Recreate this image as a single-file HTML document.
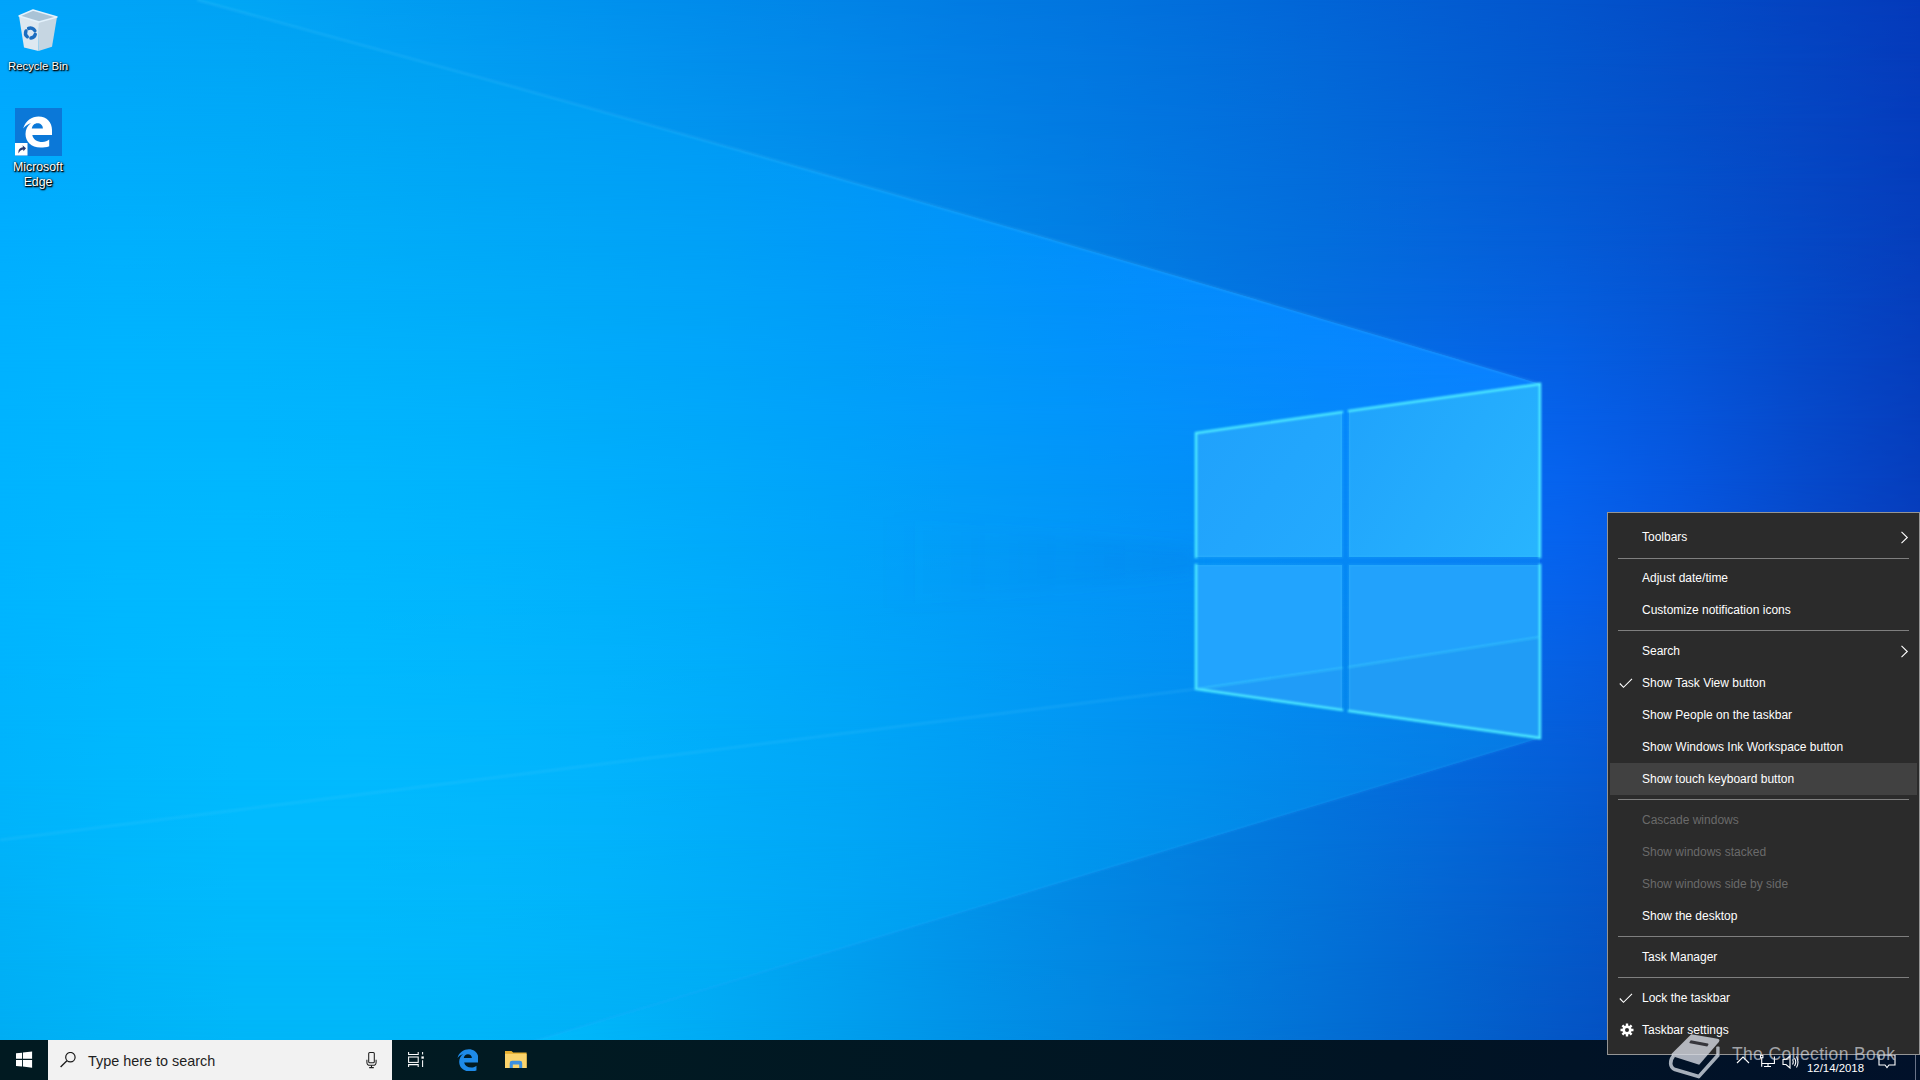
<!DOCTYPE html>
<html><head><meta charset="utf-8"><title>Desktop</title><style>
html,body{margin:0;padding:0;width:1920px;height:1080px;overflow:hidden}
body{position:relative;background:#0290ee;font-family:"Liberation Sans",sans-serif}
#wall{position:absolute;left:0;top:0;width:1920px;height:1080px;overflow:hidden}
.fo,.fb{position:absolute;left:0;top:0;width:1920px;height:1080px}
.fb{clip-path:path('M0 0 L197 0 Q868 182 1540 384 L1540 738 L404 1080 L0 1080 Z')}
.bd{position:absolute;left:0;width:1920px}
.bd i{position:absolute;left:0;top:0;width:100%;height:100%;-webkit-mask-image:linear-gradient(180deg,transparent,#000);mask-image:linear-gradient(180deg,transparent,#000)}
#fx{position:absolute;left:0;top:0}
.ico{position:absolute;left:0;width:76px;text-align:center;color:#fff;font-size:11.4px;line-height:15px;text-shadow:1px 1px 1px #000,0 0 2px rgba(0,0,0,.9),1px 1px 2px #000}
#taskbar{position:absolute;left:0;top:1040px;width:1920px;height:40px;background:linear-gradient(90deg,#011a21 0,#011a22 560px,#011424 1400px,#01112a 1920px)}
#search{position:absolute;left:48px;top:0;width:344px;height:40px;background:#f2f2f2}
#search span{position:absolute;left:40px;top:12.8px;font-size:14.4px;line-height:16px;color:#1e1e1e;white-space:nowrap}
#tb svg{position:absolute}
#menu{position:absolute;left:1607px;top:512px;width:311px;height:541px;background:#2b2b2b;border:1px solid rgba(200,200,200,.68)}
.mi{position:absolute;left:2px;width:307px;height:32px;color:#fff;font-size:12px}
.mi span{position:absolute;left:32px;top:9px;line-height:14px;white-space:nowrap}
.mi.dis{color:#6a6a6a}
.mi.hl{background:#414141}
.sep{position:absolute;left:10px;width:291px;height:1px;background:#7f7f7f}
#date{position:absolute;left:1807px;top:22px;font-size:11.4px;line-height:13px;color:#fff;white-space:nowrap}
#wm{position:absolute;left:1732px;top:1044px;font-size:17.5px;letter-spacing:.35px;line-height:20px;color:rgba(224,226,232,.66);white-space:nowrap}

</style></head><body>
<div id="wall"><div class="fo"><div class="bd" style="top:0px;height:60px;background:linear-gradient(90deg,#02b2f8 0px,#02acf7 120px,#02a6f5 240px,#029ff3 360px,#0199f0 480px,#0192ee 600px,#018beb 720px,#0284e7 840px,#027ce3 960px,#0275df 1080px,#026ddb 1200px,#0265d7 1320px,#035dd2 1440px,#0355cd 1560px,#034cc7 1680px,#0443c1 1800px,#043abb 1920px)"><i style="background:linear-gradient(90deg,#02b6fb 0px,#02b0f9 120px,#02aaf7 240px,#02a3f5 360px,#029df2 480px,#0296f0 600px,#028eec 720px,#0287e9 840px,#027fe5 960px,#0278e1 1080px,#0270dc 1200px,#0368d8 1320px,#035fd3 1440px,#0357ce 1560px,#044ec8 1680px,#0445c2 1800px,#053bbb 1920px)"></i></div><div class="bd" style="top:60px;height:60px;background:linear-gradient(90deg,#02b6fb 0px,#02b0f9 120px,#02aaf7 240px,#02a3f5 360px,#029df2 480px,#0296f0 600px,#028eec 720px,#0287e9 840px,#027fe5 960px,#0278e1 1080px,#0270dc 1200px,#0368d8 1320px,#035fd3 1440px,#0357ce 1560px,#044ec8 1680px,#0445c2 1800px,#053bbb 1920px)"><i style="background:linear-gradient(90deg,#02bbfd 0px,#02b5fb 120px,#02aef9 240px,#02a7f7 360px,#02a0f4 480px,#0299f1 600px,#0292ee 720px,#028aea 840px,#0282e6 960px,#027ae2 1080px,#0272de 1200px,#036ad9 1320px,#0361d5 1440px,#0458d0 1560px,#044fc9 1680px,#0546c3 1800px,#053cbc 1920px)"></i></div><div class="bd" style="top:120px;height:60px;background:linear-gradient(90deg,#02bbfd 0px,#02b5fb 120px,#02aef9 240px,#02a7f7 360px,#02a0f4 480px,#0299f1 600px,#0292ee 720px,#028aea 840px,#0282e6 960px,#027ae2 1080px,#0272de 1200px,#036ad9 1320px,#0361d5 1440px,#0458d0 1560px,#044fc9 1680px,#0546c3 1800px,#053cbc 1920px)"><i style="background:linear-gradient(90deg,#02c0ff 0px,#02b9fe 120px,#02b2fb 240px,#02abf9 360px,#02a4f6 480px,#029cf3 600px,#0295ef 720px,#028dec 840px,#0285e8 960px,#027de3 1080px,#0374df 1200px,#036cdb 1320px,#0463d8 1440px,#045ad3 1560px,#0451cc 1680px,#0547c4 1800px,#053dbc 1920px)"></i></div><div class="bd" style="top:180px;height:60px;background:linear-gradient(90deg,#02c0ff 0px,#02b9fe 120px,#02b2fb 240px,#02abf9 360px,#02a4f6 480px,#029cf3 600px,#0295ef 720px,#028dec 840px,#0285e8 960px,#027de3 1080px,#0374df 1200px,#036cdb 1320px,#0463d8 1440px,#045ad3 1560px,#0451cc 1680px,#0547c4 1800px,#053dbc 1920px)"><i style="background:linear-gradient(90deg,#02c4ff 0px,#02bdff 120px,#02b6fd 240px,#02affb 360px,#02a7f8 480px,#029ff4 600px,#0298f1 720px,#028fed 840px,#0287e9 960px,#027fe4 1080px,#0376e0 1200px,#036edd 1320px,#0465db 1440px,#045cd7 1560px,#0552cf 1680px,#0548c5 1800px,#063ebc 1920px)"></i></div><div class="bd" style="top:240px;height:60px;background:linear-gradient(90deg,#02c4ff 0px,#02bdff 120px,#02b6fd 240px,#02affb 360px,#02a7f8 480px,#029ff4 600px,#0298f1 720px,#028fed 840px,#0287e9 960px,#027fe4 1080px,#0376e0 1200px,#036edd 1320px,#0465db 1440px,#045cd7 1560px,#0552cf 1680px,#0548c5 1800px,#063ebc 1920px)"><i style="background:linear-gradient(90deg,#02c8ff 0px,#02c1ff 120px,#02b9ff 240px,#02b2fc 360px,#02aaf9 480px,#02a2f6 600px,#029af2 720px,#0292ee 840px,#0289ea 960px,#0381e5 1080px,#0378e2 1200px,#046fe0 1320px,#0467e0 1440px,#055edd 1560px,#0554d3 1680px,#0549c7 1800px,#063ebd 1920px)"></i></div><div class="bd" style="top:300px;height:60px;background:linear-gradient(90deg,#02c8ff 0px,#02c1ff 120px,#02b9ff 240px,#02b2fc 360px,#02aaf9 480px,#02a2f6 600px,#029af2 720px,#0292ee 840px,#0289ea 960px,#0381e5 1080px,#0378e2 1200px,#046fe0 1320px,#0467e0 1440px,#055edd 1560px,#0554d3 1680px,#0549c7 1800px,#063ebd 1920px)"><i style="background:linear-gradient(90deg,#02ccff 0px,#02c4ff 120px,#02bdff 240px,#02b5fd 360px,#02adfa 480px,#02a5f7 600px,#029df3 720px,#0294ef 840px,#028bea 960px,#0382e6 1080px,#037ae3 1200px,#0471e3 1320px,#0569e6 1440px,#0560e4 1560px,#0655d8 1680px,#0649c9 1800px,#063ebd 1920px)"></i></div><div class="bd" style="top:360px;height:60px;background:linear-gradient(90deg,#02ccff 0px,#02c4ff 120px,#02bdff 240px,#02b5fd 360px,#02adfa 480px,#02a5f7 600px,#029df3 720px,#0294ef 840px,#028bea 960px,#0382e6 1080px,#037ae3 1200px,#0471e3 1320px,#0569e6 1440px,#0560e4 1560px,#0655d8 1680px,#0649c9 1800px,#063ebd 1920px)"><i style="background:linear-gradient(90deg,#02cfff 0px,#02c8ff 120px,#02c0ff 240px,#02b8ff 360px,#02b0fb 480px,#02a7f8 600px,#029ff4 720px,#0296ef 840px,#028deb 960px,#0384e7 1080px,#037be4 1200px,#0473e6 1320px,#056beb 1440px,#0661ea 1560px,#0656dd 1680px,#064acb 1800px,#063ebd 1920px)"></i></div><div class="bd" style="top:420px;height:60px;background:linear-gradient(90deg,#02cfff 0px,#02c8ff 120px,#02c0ff 240px,#02b8ff 360px,#02b0fb 480px,#02a7f8 600px,#029ff4 720px,#0296ef 840px,#028deb 960px,#0384e7 1080px,#037be4 1200px,#0473e6 1320px,#056beb 1440px,#0661ea 1560px,#0656dd 1680px,#064acb 1800px,#063ebd 1920px)"><i style="background:linear-gradient(90deg,#02d3ff 0px,#02cbff 120px,#02c3ff 240px,#02bbff 360px,#02b2fc 480px,#02aaf8 600px,#02a1f4 720px,#0298f0 840px,#028feb 960px,#0385e7 1080px,#037ce5 1200px,#0474e8 1320px,#056cee 1440px,#0663ee 1560px,#0657e0 1680px,#064acc 1800px,#063ebd 1920px)"></i></div><div class="bd" style="top:480px;height:60px;background:linear-gradient(90deg,#02d3ff 0px,#02cbff 120px,#02c3ff 240px,#02bbff 360px,#02b2fc 480px,#02aaf8 600px,#02a1f4 720px,#0298f0 840px,#028feb 960px,#0385e7 1080px,#037ce5 1200px,#0474e8 1320px,#056cee 1440px,#0663ee 1560px,#0657e0 1680px,#064acc 1800px,#063ebd 1920px)"><i style="background:linear-gradient(90deg,#02d6ff 0px,#02ceff 120px,#02c6ff 240px,#02bdff 360px,#02b5fd 480px,#02acf9 600px,#02a3f5 720px,#0299f0 840px,#0290ec 960px,#0386e7 1080px,#037de5 1200px,#0474e8 1320px,#066cef 1440px,#0663ee 1560px,#0657e0 1680px,#064acc 1800px,#063dbd 1920px)"></i></div><div class="bd" style="top:540px;height:60px;background:linear-gradient(90deg,#02d6ff 0px,#02ceff 120px,#02c6ff 240px,#02bdff 360px,#02b5fd 480px,#02acf9 600px,#02a3f5 720px,#0299f0 840px,#0290ec 960px,#0386e7 1080px,#037de5 1200px,#0474e8 1320px,#066cef 1440px,#0663ee 1560px,#0657e0 1680px,#064acc 1800px,#063dbd 1920px)"><i style="background:linear-gradient(90deg,#02d9ff 0px,#02d1ff 120px,#02c8ff 240px,#02c0ff 360px,#02b7fe 480px,#02aefa 600px,#02a4f5 720px,#029bf1 840px,#0291ec 960px,#0387e7 1080px,#037ee4 1200px,#0475e6 1320px,#056cec 1440px,#0662eb 1560px,#0656dd 1680px,#0649ca 1800px,#063cbb 1920px)"></i></div><div class="bd" style="top:600px;height:60px;background:linear-gradient(90deg,#02d9ff 0px,#02d1ff 120px,#02c8ff 240px,#02c0ff 360px,#02b7fe 480px,#02aefa 600px,#02a4f5 720px,#029bf1 840px,#0291ec 960px,#0387e7 1080px,#037ee4 1200px,#0475e6 1320px,#056cec 1440px,#0662eb 1560px,#0656dd 1680px,#0649ca 1800px,#063cbb 1920px)"><i style="background:linear-gradient(90deg,#02dcff 0px,#01d3ff 120px,#01cbff 240px,#01c2ff 360px,#01b9fe 480px,#02affa 600px,#02a6f6 720px,#029cf1 840px,#0292ec 960px,#0388e7 1080px,#037ee3 1200px,#0474e4 1320px,#056be7 1440px,#0661e4 1560px,#0655d8 1680px,#0648c7 1800px,#063bba 1920px)"></i></div><div class="bd" style="top:660px;height:60px;background:linear-gradient(90deg,#02dcff 0px,#01d3ff 120px,#01cbff 240px,#01c2ff 360px,#01b9fe 480px,#02affa 600px,#02a6f6 720px,#029cf1 840px,#0292ec 960px,#0388e7 1080px,#037ee3 1200px,#0474e4 1320px,#056be7 1440px,#0661e4 1560px,#0655d8 1680px,#0648c7 1800px,#063bba 1920px)"><i style="background:linear-gradient(90deg,#01dfff 0px,#01d6ff 120px,#01cdff 240px,#01c4ff 360px,#01bafe 480px,#01b1fa 600px,#02a7f6 720px,#029df1 840px,#0293ec 960px,#0288e6 1080px,#037ee2 1200px,#0474e0 1320px,#056ae0 1440px,#055fdd 1560px,#0653d2 1680px,#0647c4 1800px,#063ab8 1920px)"></i></div><div class="bd" style="top:720px;height:60px;background:linear-gradient(90deg,#01dfff 0px,#01d6ff 120px,#01cdff 240px,#01c4ff 360px,#01bafe 480px,#01b1fa 600px,#02a7f6 720px,#029df1 840px,#0293ec 960px,#0288e6 1080px,#037ee2 1200px,#0474e0 1320px,#056ae0 1440px,#055fdd 1560px,#0653d2 1680px,#0647c4 1800px,#063ab8 1920px)"><i style="background:linear-gradient(90deg,#01e1ff 0px,#01d8ff 120px,#01cfff 240px,#01c5ff 360px,#01bcff 480px,#01b2fa 600px,#01a8f6 720px,#029ef1 840px,#0293eb 960px,#0289e6 1080px,#037ee1 1200px,#0373dd 1320px,#0469db 1440px,#055ed6 1560px,#0552cc 1680px,#0645c0 1800px,#0639b6 1920px)"></i></div><div class="bd" style="top:780px;height:60px;background:linear-gradient(90deg,#01e1ff 0px,#01d8ff 120px,#01cfff 240px,#01c5ff 360px,#01bcff 480px,#01b2fa 600px,#01a8f6 720px,#029ef1 840px,#0293eb 960px,#0289e6 1080px,#037ee1 1200px,#0373dd 1320px,#0469db 1440px,#055ed6 1560px,#0552cc 1680px,#0645c0 1800px,#0639b6 1920px)"><i style="background:linear-gradient(90deg,#01e3ff 0px,#01daff 120px,#01d0ff 240px,#01c7ff 360px,#01bdff 480px,#01b3fa 600px,#01a9f5 720px,#029ef0 840px,#0293eb 960px,#0289e5 1080px,#037edf 1200px,#0373db 1320px,#0468d6 1440px,#045cd0 1560px,#0550c7 1680px,#0644be 1800px,#0637b4 1920px)"></i></div><div class="bd" style="top:840px;height:60px;background:linear-gradient(90deg,#01e3ff 0px,#01daff 120px,#01d0ff 240px,#01c7ff 360px,#01bdff 480px,#01b3fa 600px,#01a9f5 720px,#029ef0 840px,#0293eb 960px,#0289e5 1080px,#037edf 1200px,#0373db 1320px,#0468d6 1440px,#045cd0 1560px,#0550c7 1680px,#0644be 1800px,#0637b4 1920px)"><i style="background:linear-gradient(90deg,#01e5ff 0px,#01dcff 120px,#01d2ff 240px,#01c8ff 360px,#01befe 480px,#01b4fa 600px,#01a9f5 720px,#019ef0 840px,#0294ea 960px,#0288e4 1080px,#027dde 1200px,#0372d8 1320px,#0466d3 1440px,#045bcc 1560px,#054ec4 1680px,#0542bb 1800px,#0635b2 1920px)"></i></div><div class="bd" style="top:900px;height:60px;background:linear-gradient(90deg,#01e5ff 0px,#01dcff 120px,#01d2ff 240px,#01c8ff 360px,#01befe 480px,#01b4fa 600px,#01a9f5 720px,#019ef0 840px,#0294ea 960px,#0288e4 1080px,#027dde 1200px,#0372d8 1320px,#0466d3 1440px,#045bcc 1560px,#054ec4 1680px,#0542bb 1800px,#0635b2 1920px)"><i style="background:linear-gradient(90deg,#00e7ff 0px,#00ddff 120px,#00d3ff 240px,#00c9ff 360px,#00bffe 480px,#01b4f9 600px,#01aaf4 720px,#019fef 840px,#0193e9 960px,#0288e3 1080px,#027ddd 1200px,#0371d7 1320px,#0365d0 1440px,#0459c9 1560px,#054dc1 1680px,#0540b9 1800px,#0633b0 1920px)"></i></div><div class="bd" style="top:960px;height:60px;background:linear-gradient(90deg,#00e7ff 0px,#00ddff 120px,#00d3ff 240px,#00c9ff 360px,#00bffe 480px,#01b4f9 600px,#01aaf4 720px,#019fef 840px,#0193e9 960px,#0288e3 1080px,#027ddd 1200px,#0371d7 1320px,#0365d0 1440px,#0459c9 1560px,#054dc1 1680px,#0540b9 1800px,#0633b0 1920px)"><i style="background:linear-gradient(90deg,#00e8ff 0px,#00dfff 120px,#00d4ff 240px,#00caff 360px,#00bffe 480px,#00b5f9 600px,#01aaf4 720px,#019fee 840px,#0193e8 960px,#0288e2 1080px,#027cdc 1200px,#0370d5 1320px,#0364ce 1440px,#0457c7 1560px,#044bbf 1680px,#053eb7 1800px,#0631ae 1920px)"></i></div><div class="bd" style="top:1020px;height:60px;background:linear-gradient(90deg,#00e8ff 0px,#00dfff 120px,#00d4ff 240px,#00caff 360px,#00bffe 480px,#00b5f9 600px,#01aaf4 720px,#019fee 840px,#0193e8 960px,#0288e2 1080px,#027cdc 1200px,#0370d5 1320px,#0364ce 1440px,#0457c7 1560px,#044bbf 1680px,#053eb7 1800px,#0631ae 1920px)"><i style="background:linear-gradient(90deg,#00eaff 0px,#00e0ff 120px,#00d5ff 240px,#00cbff 360px,#00c0fd 480px,#00b5f8 600px,#00aaf3 720px,#019eed 840px,#0193e7 960px,#0187e1 1080px,#027bda 1200px,#026fd4 1320px,#0362cc 1440px,#0356c5 1560px,#0449bd 1680px,#053cb5 1800px,#062fac 1920px)"></i></div></div><div class="fb"><div class="bd" style="top:0px;height:60px;background:linear-gradient(90deg,#00a4fb 0px,#00a4f7 120px,#00a2f4 240px,#009ff1 360px,#009bf0 480px,#0097ef 600px,#0092f0 720px,#008df2 840px,#0188f5 960px,#0284fa 1080px,#0481ff 1200px,#077eff 1320px,#0a7dff 1440px,#0f7eff 1560px,#1481ff 1680px,#1b86ff 1800px,#238dff 1920px)"><i style="background:linear-gradient(90deg,#00a7fd 0px,#00a7f9 120px,#00a6f6 240px,#00a3f3 360px,#009ff2 480px,#009bf2 600px,#0096f2 720px,#0091f4 840px,#018cf7 960px,#0287fa 1080px,#0484ff 1200px,#0781ff 1320px,#0a7fff 1440px,#0e7fff 1560px,#1481ff 1680px,#1a85ff 1800px,#228cff 1920px)"></i></div><div class="bd" style="top:60px;height:60px;background:linear-gradient(90deg,#00a7fd 0px,#00a7f9 120px,#00a6f6 240px,#00a3f3 360px,#009ff2 480px,#009bf2 600px,#0096f2 720px,#0091f4 840px,#018cf7 960px,#0287fa 1080px,#0484ff 1200px,#0781ff 1320px,#0a7fff 1440px,#0e7fff 1560px,#1481ff 1680px,#1a85ff 1800px,#228cff 1920px)"><i style="background:linear-gradient(90deg,#00aafe 0px,#00aafa 120px,#00a9f8 240px,#00a7f6 360px,#00a3f4 480px,#009ff4 600px,#009af4 720px,#0094f6 840px,#018ff8 960px,#028afb 1080px,#0486ff 1200px,#0783ff 1320px,#0a81ff 1440px,#0e80ff 1560px,#1382ff 1680px,#1985ff 1800px,#218bff 1920px)"></i></div><div class="bd" style="top:120px;height:60px;background:linear-gradient(90deg,#00aafe 0px,#00aafa 120px,#00a9f8 240px,#00a7f6 360px,#00a3f4 480px,#009ff4 600px,#009af4 720px,#0094f6 840px,#018ff8 960px,#028afb 1080px,#0486ff 1200px,#0783ff 1320px,#0a81ff 1440px,#0e80ff 1560px,#1382ff 1680px,#1985ff 1800px,#218bff 1920px)"><i style="background:linear-gradient(90deg,#00acff 0px,#00adfc 120px,#00acf9 240px,#00aaf7 360px,#00a6f6 480px,#00a2f6 600px,#009df6 720px,#0198f7 840px,#0192f9 960px,#028dfb 1080px,#0488ff 1200px,#0685ff 1320px,#0982ff 1440px,#0d81ff 1560px,#1281ff 1680px,#1984ff 1800px,#2089ff 1920px)"></i></div><div class="bd" style="top:180px;height:60px;background:linear-gradient(90deg,#00acff 0px,#00adfc 120px,#00acf9 240px,#00aaf7 360px,#00a6f6 480px,#00a2f6 600px,#009df6 720px,#0198f7 840px,#0192f9 960px,#028dfb 1080px,#0488ff 1200px,#0685ff 1320px,#0982ff 1440px,#0d81ff 1560px,#1281ff 1680px,#1984ff 1800px,#2089ff 1920px)"><i style="background:linear-gradient(90deg,#00aeff 0px,#00b0fd 120px,#01affb 240px,#01adf9 360px,#01a9f8 480px,#01a5f7 600px,#01a0f7 720px,#019af8 840px,#0195f9 960px,#028ffb 1080px,#048afe 1200px,#0686ff 1320px,#0983ff 1440px,#0d81ff 1560px,#1281ff 1680px,#1883ff 1800px,#1f87ff 1920px)"></i></div><div class="bd" style="top:240px;height:60px;background:linear-gradient(90deg,#00aeff 0px,#00b0fd 120px,#01affb 240px,#01adf9 360px,#01a9f8 480px,#01a5f7 600px,#01a0f7 720px,#019af8 840px,#0195f9 960px,#028ffb 1080px,#048afe 1200px,#0686ff 1320px,#0983ff 1440px,#0d81ff 1560px,#1281ff 1680px,#1883ff 1800px,#1f87ff 1920px)"><i style="background:linear-gradient(90deg,#00b0ff 0px,#00b2fe 120px,#01b1fc 240px,#01affb 360px,#01acf9 480px,#01a8f9 600px,#01a3f9 720px,#019df9 840px,#0297fa 960px,#0291fb 1080px,#048cfd 1200px,#0687ff 1320px,#0984ff 1440px,#0c81ff 1560px,#1180ff 1680px,#1781ff 1800px,#1e84ff 1920px)"></i></div><div class="bd" style="top:300px;height:60px;background:linear-gradient(90deg,#00b0ff 0px,#00b2fe 120px,#01b1fc 240px,#01affb 360px,#01acf9 480px,#01a8f9 600px,#01a3f9 720px,#019df9 840px,#0297fa 960px,#0291fb 1080px,#048cfd 1200px,#0687ff 1320px,#0984ff 1440px,#0c81ff 1560px,#1180ff 1680px,#1781ff 1800px,#1e84ff 1920px)"><i style="background:linear-gradient(90deg,#00b2ff 0px,#00b4ff 120px,#01b4fd 240px,#01b2fc 360px,#01affb 480px,#01aafa 600px,#01a5fa 720px,#019ff9 840px,#0299fa 960px,#0293fb 1080px,#048dfc 1200px,#0688fe 1320px,#0884ff 1440px,#0c81ff 1560px,#107fff 1680px,#1680ff 1800px,#1c82ff 1920px)"></i></div><div class="bd" style="top:360px;height:60px;background:linear-gradient(90deg,#00b2ff 0px,#00b4ff 120px,#01b4fd 240px,#01b2fc 360px,#01affb 480px,#01aafa 600px,#01a5fa 720px,#019ff9 840px,#0299fa 960px,#0293fb 1080px,#048dfc 1200px,#0688fe 1320px,#0884ff 1440px,#0c81ff 1560px,#107fff 1680px,#1680ff 1800px,#1c82ff 1920px)"><i style="background:linear-gradient(90deg,#00b3ff 0px,#01b5ff 120px,#01b5fe 240px,#01b4fd 360px,#01b1fc 480px,#01acfb 600px,#01a7fa 720px,#01a1fa 840px,#029bfa 960px,#0295fa 1080px,#048ffa 1200px,#0589fb 1320px,#0884fd 1440px,#0b80fe 1560px,#107eff 1680px,#157dff 1800px,#1b7fff 1920px)"></i></div><div class="bd" style="top:420px;height:60px;background:linear-gradient(90deg,#00b3ff 0px,#01b5ff 120px,#01b5fe 240px,#01b4fd 360px,#01b1fc 480px,#01acfb 600px,#01a7fa 720px,#01a1fa 840px,#029bfa 960px,#0295fa 1080px,#048ffa 1200px,#0589fb 1320px,#0884fd 1440px,#0b80fe 1560px,#107eff 1680px,#157dff 1800px,#1b7fff 1920px)"><i style="background:linear-gradient(90deg,#00b4ff 0px,#01b6ff 120px,#01b7fe 240px,#01b6fd 360px,#01b3fc 480px,#01aefc 600px,#01a9fb 720px,#01a3fa 840px,#029cf9 960px,#0296f9 1080px,#038ff9 1200px,#0589f9 1320px,#0884f9 1440px,#0b80fa 1560px,#0f7cfb 1680px,#147bfc 1800px,#1a7bfe 1920px)"></i></div><div class="bd" style="top:480px;height:60px;background:linear-gradient(90deg,#00b4ff 0px,#01b6ff 120px,#01b7fe 240px,#01b6fd 360px,#01b3fc 480px,#01aefc 600px,#01a9fb 720px,#01a3fa 840px,#029cf9 960px,#0296f9 1080px,#038ff9 1200px,#0589f9 1320px,#0884f9 1440px,#0b80fa 1560px,#0f7cfb 1680px,#147bfc 1800px,#1a7bfe 1920px)"><i style="background:linear-gradient(90deg,#00b4ff 0px,#01b7ff 120px,#01b8ff 240px,#01b7fe 360px,#01b4fd 480px,#01b0fc 600px,#01aafb 720px,#01a4fa 840px,#029ef9 960px,#0297f8 1080px,#0390f7 1200px,#0589f6 1320px,#0783f6 1440px,#0a7ef5 1560px,#0e7bf5 1680px,#1378f5 1800px,#1978f5 1920px)"></i></div><div class="bd" style="top:540px;height:60px;background:linear-gradient(90deg,#00b4ff 0px,#01b7ff 120px,#01b8ff 240px,#01b7fe 360px,#01b4fd 480px,#01b0fc 600px,#01aafb 720px,#01a4fa 840px,#029ef9 960px,#0297f8 1080px,#0390f7 1200px,#0589f6 1320px,#0783f6 1440px,#0a7ef5 1560px,#0e7bf5 1680px,#1378f5 1800px,#1978f5 1920px)"><i style="background:linear-gradient(90deg,#00b5ff 0px,#01b8ff 120px,#01b9ff 240px,#01b8fe 360px,#02b5fd 480px,#01b1fc 600px,#01acfb 720px,#01a5fa 840px,#029ef8 960px,#0297f7 1080px,#0390f5 1200px,#0489f3 1320px,#0782f2 1440px,#097df0 1560px,#0d78ef 1680px,#1275ee 1800px,#1874ec 1920px)"></i></div><div class="bd" style="top:600px;height:60px;background:linear-gradient(90deg,#00b5ff 0px,#01b8ff 120px,#01b9ff 240px,#01b8fe 360px,#02b5fd 480px,#01b1fc 600px,#01acfb 720px,#01a5fa 840px,#029ef8 960px,#0297f7 1080px,#0390f5 1200px,#0489f3 1320px,#0782f2 1440px,#097df0 1560px,#0d78ef 1680px,#1275ee 1800px,#1874ec 1920px)"><i style="background:linear-gradient(90deg,#00b4fe 0px,#00b8ff 120px,#01baff 240px,#01b9fe 360px,#02b6fd 480px,#02b2fc 600px,#01adfb 720px,#01a6f9 840px,#019ff7 960px,#0297f5 1080px,#0390f3 1200px,#0488f0 1320px,#0681ee 1440px,#097beb 1560px,#0c76e8 1680px,#1172e6 1800px,#1670e3 1920px)"></i></div><div class="bd" style="top:660px;height:60px;background:linear-gradient(90deg,#00b4fe 0px,#00b8ff 120px,#01baff 240px,#01b9fe 360px,#02b6fd 480px,#02b2fc 600px,#01adfb 720px,#01a6f9 840px,#019ff7 960px,#0297f5 1080px,#0390f3 1200px,#0488f0 1320px,#0681ee 1440px,#097beb 1560px,#0c76e8 1680px,#1172e6 1800px,#1670e3 1920px)"><i style="background:linear-gradient(90deg,#00b4fd 0px,#00b8fe 120px,#01bafe 240px,#02b9fe 360px,#02b7fd 480px,#02b3fc 600px,#01adfa 720px,#01a7f8 840px,#019ff6 960px,#0297f3 1080px,#028ff0 1200px,#0487ed 1320px,#0580e9 1440px,#0879e6 1560px,#0b73e2 1680px,#106ede 1800px,#156bda 1920px)"></i></div><div class="bd" style="top:720px;height:60px;background:linear-gradient(90deg,#00b4fd 0px,#00b8fe 120px,#01bafe 240px,#02b9fe 360px,#02b7fd 480px,#02b3fc 600px,#01adfa 720px,#01a7f8 840px,#019ff6 960px,#0297f3 1080px,#028ff0 1200px,#0487ed 1320px,#0580e9 1440px,#0879e6 1560px,#0b73e2 1680px,#106ede 1800px,#156bda 1920px)"><i style="background:linear-gradient(90deg,#00b4fc 0px,#00b8fd 120px,#01bafe 240px,#02bafe 360px,#02b7fd 480px,#02b3fc 600px,#01adfa 720px,#01a7f7 840px,#019ff4 960px,#0297f1 1080px,#028fed 1200px,#0386e9 1320px,#057ee5 1440px,#0777e0 1560px,#0a70db 1680px,#0e6bd6 1800px,#1467d0 1920px)"></i></div><div class="bd" style="top:780px;height:60px;background:linear-gradient(90deg,#00b4fc 0px,#00b8fd 120px,#01bafe 240px,#02bafe 360px,#02b7fd 480px,#02b3fc 600px,#01adfa 720px,#01a7f7 840px,#019ff4 960px,#0297f1 1080px,#028fed 1200px,#0386e9 1320px,#057ee5 1440px,#0777e0 1560px,#0a70db 1680px,#0e6bd6 1800px,#1467d0 1920px)"><i style="background:linear-gradient(90deg,#00b3fa 0px,#00b7fc 120px,#01bafd 240px,#01bafd 360px,#02b7fc 480px,#02b3fb 600px,#01adf9 720px,#01a7f6 840px,#019ff3 960px,#0196ef 1080px,#028eea 1200px,#0385e6 1320px,#047ce0 1440px,#0674da 1560px,#096dd4 1680px,#0d66cd 1800px,#1261c6 1920px)"></i></div><div class="bd" style="top:840px;height:60px;background:linear-gradient(90deg,#00b3fa 0px,#00b7fc 120px,#01bafd 240px,#01bafd 360px,#02b7fc 480px,#02b3fb 600px,#01adf9 720px,#01a7f6 840px,#019ff3 960px,#0196ef 1080px,#028eea 1200px,#0385e6 1320px,#047ce0 1440px,#0674da 1560px,#096dd4 1680px,#0d66cd 1800px,#1261c6 1920px)"><i style="background:linear-gradient(90deg,#00b1f8 0px,#00b7fb 120px,#01b9fc 240px,#01b9fc 360px,#02b7fb 480px,#01b3fa 600px,#01adf8 720px,#01a6f5 840px,#019ef1 960px,#0195ec 1080px,#018ce7 1200px,#0283e1 1320px,#047adb 1440px,#0671d4 1560px,#0869cd 1680px,#0c62c5 1800px,#115cbc 1920px)"></i></div><div class="bd" style="top:900px;height:60px;background:linear-gradient(90deg,#00b1f8 0px,#00b7fb 120px,#01b9fc 240px,#01b9fc 360px,#02b7fb 480px,#01b3fa 600px,#01adf8 720px,#01a6f5 840px,#019ef1 960px,#0195ec 1080px,#018ce7 1200px,#0283e1 1320px,#047adb 1440px,#0671d4 1560px,#0869cd 1680px,#0c62c5 1800px,#115cbc 1920px)"><i style="background:linear-gradient(90deg,#00b0f6 0px,#00b5f9 120px,#01b8fa 240px,#01b8fb 360px,#01b6fa 480px,#01b2f9 600px,#01adf6 720px,#01a5f3 840px,#019def 960px,#0194ea 1080px,#018be4 1200px,#0281dd 1320px,#0377d6 1440px,#056ece 1560px,#0765c5 1680px,#0b5dbc 1800px,#0f56b2 1920px)"></i></div><div class="bd" style="top:960px;height:60px;background:linear-gradient(90deg,#00b0f6 0px,#00b5f9 120px,#01b8fa 240px,#01b8fb 360px,#01b6fa 480px,#01b2f9 600px,#01adf6 720px,#01a5f3 840px,#019def 960px,#0194ea 1080px,#018be4 1200px,#0281dd 1320px,#0377d6 1440px,#056ece 1560px,#0765c5 1680px,#0b5dbc 1800px,#0f56b2 1920px)"><i style="background:linear-gradient(90deg,#00aef4 0px,#00b4f7 120px,#01b7f9 240px,#01b7f9 360px,#01b5f9 480px,#01b1f7 600px,#01acf5 720px,#01a4f1 840px,#019cec 960px,#0093e7 1080px,#0189e0 1200px,#017ed9 1320px,#0274d0 1440px,#046ac7 1560px,#0660bd 1680px,#0a58b3 1800px,#0e50a7 1920px)"></i></div><div class="bd" style="top:1020px;height:60px;background:linear-gradient(90deg,#00aef4 0px,#00b4f7 120px,#01b7f9 240px,#01b7f9 360px,#01b5f9 480px,#01b1f7 600px,#01acf5 720px,#01a4f1 840px,#019cec 960px,#0093e7 1080px,#0189e0 1200px,#017ed9 1320px,#0274d0 1440px,#046ac7 1560px,#0660bd 1680px,#0a58b3 1800px,#0e50a7 1920px)"><i style="background:linear-gradient(90deg,#00acf2 0px,#00b2f5 120px,#00b5f7 240px,#01b6f8 360px,#01b4f7 480px,#01b0f6 600px,#01aaf3 720px,#01a3ef 840px,#009aea 960px,#0091e3 1080px,#0086dc 1200px,#017cd4 1320px,#0271cb 1440px,#0366c0 1560px,#055cb5 1680px,#0852a9 1800px,#0c4a9c 1920px)"></i></div></div></div>
<svg id="fx" width="1920" height="1080" viewBox="0 0 1920 1080">
<defs>
<radialGradient id="glow" cx="1540" cy="520" r="260" gradientUnits="userSpaceOnUse">
<stop offset="0" stop-color="#1478ff" stop-opacity=".55"/><stop offset="1" stop-color="#1478ff" stop-opacity="0"/>
</radialGradient>
<filter id="bl1" x="-5%" y="-5%" width="110%" height="110%"><feGaussianBlur stdDeviation="0.8"/></filter>
</defs>
<path d="M197 0 Q868 182 1540 384" fill="none" stroke="#5fd0ff" stroke-opacity=".22" stroke-width="2" filter="url(#bl1)"/>
<path d="M1196 689 L0 840" fill="none" stroke="#6ad8ff" stroke-opacity=".14" stroke-width="2.5" filter="url(#bl1)"/>
<path d="M1540 738 L404 1080" fill="none" stroke="#3aa8ff" stroke-opacity=".18" stroke-width="2" filter="url(#bl1)"/>
<!-- logo -->
<defs>
<linearGradient id="shb" gradientUnits="userSpaceOnUse" x1="1196" y1="0" x2="880" y2="0"><stop offset="0" stop-color="#0068d0" stop-opacity=".13"/><stop offset="1" stop-color="#0068d0" stop-opacity="0"/></linearGradient>
<linearGradient id="ptr" gradientUnits="userSpaceOnUse" x1="1349" y1="420" x2="1540" y2="540"><stop offset="0" stop-color="#20a4fc"/><stop offset="1" stop-color="#28b4fe"/></linearGradient>
<linearGradient id="ptl" gradientUnits="userSpaceOnUse" x1="1196" y1="440" x2="1342" y2="550"><stop offset="0" stop-color="#20a2fc"/><stop offset="1" stop-color="#24aafe"/></linearGradient>
<filter id="bl8" x="-20%" y="-50%" width="140%" height="200%"><feGaussianBlur stdDeviation="8"/></filter>
</defs>
<polygon points="1196,550 1196,572 880,610 880,515" fill="url(#shb)" filter="url(#bl8)"/>
<g>
<polygon points="1196,433 1342,412 1342,557 1196,557" fill="url(#ptl)"/>
<polygon points="1349,411 1540,384 1540,557 1349,557" fill="url(#ptr)"/>
<polygon points="1196,565 1342,565 1342,710 1196,689" fill="#22a4fe"/>
<polygon points="1349,565 1540,565 1540,738 1349,711" fill="#22a2fc"/>
<polygon points="1196,689 1342,668 1342,710" fill="#209cf8"/>
<polygon points="1349,667 1540,637 1540,738 1349,711" fill="#209cf6"/>
<g fill="none" stroke-linecap="square" filter="url(#bl1)">
<path d="M1196 557 L1196 433 L1342 412" stroke="#50eeff" stroke-width="2.4"/>
<path d="M1349 411 L1540 384 L1540 557" stroke="#50eeff" stroke-width="2.4"/>
<path d="M1196 565 L1196 689 L1342 710" stroke="#50eeff" stroke-width="2.4"/>
<path d="M1349 711 L1540 738 L1540 565" stroke="#50eeff" stroke-width="2.4"/>
<path d="M1342 412 L1342 557 L1196 557" stroke="#40c8ff" stroke-width="1.2" stroke-opacity=".45"/>
<path d="M1349 411 L1349 557 L1540 557" stroke="#40c8ff" stroke-width="1.2" stroke-opacity=".35"/>
<path d="M1196 565 L1342 565 L1342 710" stroke="#40c8ff" stroke-width="1.2" stroke-opacity=".35"/>
<path d="M1540 565 L1349 565 L1349 711" stroke="#40c8ff" stroke-width="1.2" stroke-opacity=".35"/>
<path d="M1196 689 L1342 668 M1349 667 L1540 637" stroke="#40d8ff" stroke-width="1.6" stroke-opacity=".55"/>
</g>
</g>
</svg>

<!-- desktop icons -->
<svg style="position:absolute;left:0;top:0" width="80" height="200" viewBox="0 0 80 200">
<polygon points="19,16 39,22 38.5,51 24,47.5" fill="#dde8f0"/>
<polygon points="39,22 57,17 52,46.7 38.5,51" fill="#c6d6e2"/>
<polygon points="19,16 33,10 57,17 39,22" fill="#a9c3d6" stroke="#e4f2fc" stroke-width="1.4" stroke-linejoin="round"/>
<g stroke="#1b6dc0" stroke-width="3.4" stroke-linecap="round" fill="none">
<path d="M28.6 28.4 A5 5 0 0 1 34.9 30.7"/><path d="M27.3 36.8 A5 5 0 0 1 26 30.9"/><path d="M35.3 34.3 A5 5 0 0 1 30.9 38"/>
</g>
<rect x="15" y="108" width="47" height="48" fill="#0b78d8"/>
<path d="M23.2 128.5 C25.5 120.5 32 116.4 38.5 116.4 C47 116.4 52 122.5 52 130 L52 135 L32.3 135 C33.3 139.8 37 142 42.5 142 C45 142 47.5 141 49.2 139.5 L49.2 146.2 C46.5 147.2 43.5 147.6 40.5 147.6 C31 147.6 25.5 141.5 25.5 134 C25.5 129.5 27.5 125.5 31 123 C28 124 25 126 23.2 128.5 Z M31.8 128.6 L42.9 128.6 C42.9 125.3 40.5 123.3 37.5 123.3 C34.5 123.3 32.2 125.5 31.8 128.6 Z" fill="#fff" fill-rule="evenodd"/>
<rect x="15" y="143" width="12.5" height="12.5" fill="#fff"/>
<path d="M18.5 153.5 C18 150 19.5 147.8 23 147.3 L22.5 145.3 L26 148.2 L23.5 151.3 L23.2 149.5 C21 149.8 19.5 151.2 18.5 153.5 Z" fill="#2b3a70"/>
</svg>
<div class="ico" style="top:59px">Recycle Bin</div>
<div class="ico" style="top:160px;font-size:12.3px">Microsoft<br>Edge</div>

<!-- taskbar -->
<div id="taskbar">
<svg style="position:absolute;left:14px;top:10px" width="20" height="20" viewBox="14 1050 20 20">
<polygon points="16,1053.3 22,1052.7 22,1058.7 16,1058.7" fill="#fff"/>
<polygon points="22.9,1052.5 32.1,1051.6 32.1,1058.7 22.9,1058.7" fill="#fff"/>
<polygon points="16,1059.9 22,1059.9 22,1066.4 16,1065.9" fill="#fff"/>
<polygon points="22.9,1059.9 32.1,1059.9 32.1,1067.8 22.9,1066.6" fill="#fff"/>
</svg>
<div id="search">
<svg style="position:absolute;left:12px;top:12px" width="17" height="17" viewBox="0 0 17 17">
<circle cx="10.4" cy="5.2" r="4.7" fill="none" stroke="#1a1a1a" stroke-width="1.2"/>
<path d="M6.9 8.7 L0.6 15" stroke="#1a1a1a" stroke-width="1.3"/>
</svg>
<span>Type here to search</span>
<svg style="position:absolute;left:316px;top:10px" width="16" height="20" viewBox="364 1050 16 20">
<g fill="none" stroke="#1e1e1e" stroke-width="1.05">
<rect x="368.7" y="1052.5" width="5.6" height="10.3" rx="1"/>
<path d="M366.9 1059.8 V1062.2 C366.9 1064.2 368.3 1065.3 370 1065.3 H373 C374.7 1065.3 376.1 1064.2 376.1 1062.2 V1059.8"/>
<path d="M371.5 1065.3 V1067.3 M369.2 1067.6 H373.8"/>
</g></svg>
</div>
<svg style="position:absolute;left:404px;top:10px" width="22" height="20" viewBox="404 1050 22 20">
<g fill="none" stroke="#fff" stroke-width="1.05">
<path d="M408.6 1052 V1054.4 H418.2 V1052"/>
<rect x="408.6" y="1057" width="9.6" height="5.4"/>
<path d="M408.6 1067 V1064.6 H418.2 V1067"/>
<path d="M422.6 1052 V1054.6 M422.6 1060.2 V1067"/>
</g><rect x="421.4" y="1056.4" width="2.4" height="2.3" fill="#fff"/></svg>
<svg style="position:absolute;left:456.5px;top:8.5px" width="21.5" height="22.5" viewBox="22.5 116 29.5 31.6" preserveAspectRatio="none"><path d="M23.2 128.5 C25.5 120.5 32 116.4 38.5 116.4 C47 116.4 52 122.5 52 130 L52 135 L32.3 135 C33.3 139.8 37 142 42.5 142 C45 142 47.5 141 49.2 139.5 L49.2 146.2 C46.5 147.2 43.5 147.6 40.5 147.6 C31 147.6 25.5 141.5 25.5 134 C25.5 129.5 27.5 125.5 31 123 C28 124 25 126 23.2 128.5 Z M31.8 128.6 L42.9 128.6 C42.9 125.3 40.5 123.3 37.5 123.3 C34.5 123.3 32.2 125.5 31.8 128.6 Z" fill="#1e8ae8" fill-rule="evenodd"/></svg>
<svg style="position:absolute;left:503px;top:9px" width="26" height="21" viewBox="503 1049 26 21">
<path d="M505 1051 H511.5 L513.2 1052.6 H526.6 V1068 H505 Z" fill="#e6ae2e"/>
<rect x="505" y="1053.8" width="21.6" height="14.2" fill="#fbd46c"/>
<path d="M509.7 1068 V1063.2 Q509.7 1060.8 512.1 1060.8 H519.8 Q522.2 1060.8 522.2 1063.2 V1068 H519.2 V1064.6 H512.8 V1068 Z" fill="#3b90e2"/>
</svg>
<!-- tray -->
<svg style="position:absolute;left:1736px;top:16px" width="14" height="8" viewBox="0 0 14 8">
<path d="M1 7 L7 1 L13 7" fill="none" stroke="#fff" stroke-width="1.1"/>
</svg>
<svg style="position:absolute;left:1759px;top:14px" width="18" height="14" viewBox="1759 1054 18 14">
<g fill="none" stroke="#fff" stroke-width="1.1"><rect x="1760.5" y="1055.3" width="2.4" height="2.4"/><path d="M1761.7 1057.8 V1066.8 M1761.7 1063.5 H1774.4 V1056.5 M1768 1063.5 V1066.5 M1764 1066.5 H1771"/></g>
</svg>
<svg style="position:absolute;left:1782px;top:15px" width="17" height="14" viewBox="0 0 17 14">
<g fill="none" stroke="#fff" stroke-width="1.1"><path d="M1 4.5 L4 4.5 L8 1 L8 13 L4 9.5 L1 9.5 Z"/><path d="M10.5 4.5 Q12 7 10.5 9.5 M12.5 3 Q15 7 12.5 11 M14.5 1.5 Q17.5 7 14.5 12.5"/></g>
</svg>
<div id="date">12/14/2018</div>
<svg style="position:absolute;left:1878px;top:14px" width="18" height="16" viewBox="0 0 18 16">
<path d="M1 1 L17 1 L17 11 L11 11 L9 13.5 L7 11 L1 11 Z" fill="none" stroke="#fff" stroke-width="1.1"/>
</svg>
<div style="position:absolute;left:1915px;top:0;width:1px;height:40px;background:#6a7388"></div>
</div>

<!-- context menu -->
<div id="menu">
<div class="mi" style="top:8px"><span>Toolbars</span>
<svg style="position:absolute;left:290px;top:10px" width="9" height="13" viewBox="0 0 9 13"><path d="M1.5 0.8 L7.3 6.5 L1.5 12.2" fill="none" stroke="#fff" stroke-width="1.1"/></svg></div>
<div class="sep" style="top:45px"></div>
<div class="mi" style="top:49px"><span>Adjust date/time</span></div>
<div class="mi" style="top:81px"><span>Customize notification icons</span></div>
<div class="sep" style="top:117px"></div>
<div class="mi" style="top:122px"><span>Search</span>
<svg style="position:absolute;left:290px;top:10px" width="9" height="13" viewBox="0 0 9 13"><path d="M1.5 0.8 L7.3 6.5 L1.5 12.2" fill="none" stroke="#fff" stroke-width="1.1"/></svg></div>
<div class="mi" style="top:154px"><span>Show Task View button</span>
<svg style="position:absolute;left:9px;top:11px" width="14" height="11" viewBox="0 0 14 11"><path d="M0.8 5.5 L4.5 9.3 L13 0.8" fill="none" stroke="#fff" stroke-width="1.1"/></svg></div>
<div class="mi" style="top:186px"><span>Show People on the taskbar</span></div>
<div class="mi" style="top:218px"><span>Show Windows Ink Workspace button</span></div>
<div class="mi hl" style="top:250px"><span>Show touch keyboard button</span></div>
<div class="sep" style="top:286px"></div>
<div class="mi dis" style="top:291px"><span>Cascade windows</span></div>
<div class="mi dis" style="top:323px"><span>Show windows stacked</span></div>
<div class="mi dis" style="top:355px"><span>Show windows side by side</span></div>
<div class="mi" style="top:387px"><span>Show the desktop</span></div>
<div class="sep" style="top:423px"></div>
<div class="mi" style="top:428px"><span>Task Manager</span></div>
<div class="sep" style="top:464px"></div>
<div class="mi" style="top:469px"><span>Lock the taskbar</span>
<svg style="position:absolute;left:9px;top:11px" width="14" height="11" viewBox="0 0 14 11"><path d="M0.8 5.5 L4.5 9.3 L13 0.8" fill="none" stroke="#fff" stroke-width="1.1"/></svg></div>
<div class="mi" style="top:501px"><span>Taskbar settings</span>
<svg style="position:absolute;left:10px;top:9px" width="14" height="14" viewBox="0 0 14 14"><g fill="#fff"><circle cx="7" cy="7" r="4.6"/><g stroke="#fff" stroke-width="2.4"><path d="M7 0.5 L7 13.5 M0.5 7 L13.5 7 M2.4 2.4 L11.6 11.6 M11.6 2.4 L2.4 11.6"/></g></g><circle cx="7" cy="7" r="2" fill="#2b2b2b"/></svg></div>
</div>

<!-- watermark -->
<svg style="position:absolute;left:1664px;top:1030px" width="64" height="50" viewBox="1664 1030 64 50">
<path d="M1673.5 1056 C1669.5 1060.5 1669.5 1067.5 1675 1069.6 L1698.7 1076.6 L1718.6 1054.5" fill="none" stroke="rgba(214,220,230,.78)" stroke-width="3.6" stroke-linejoin="round"/>
<path d="M1691.3 1034.2 L1717.6 1038.8 Q1720.6 1039.5 1718.8 1042 L1699.2 1064.7 L1673.4 1056.5 Q1670.6 1055.6 1672.2 1053.3 Z" fill="rgba(214,218,226,.8)"/>
<path d="M1690.8 1040.3 L1707.9 1043.6 Q1709 1044 1708.2 1045 L1707.2 1046.6 L1690 1043.3 Q1688.9 1043 1689.6 1042 Z" fill="rgba(40,40,46,.9)"/>
<rect x="1716.2" y="1046.5" width="3.4" height="8" rx="1" fill="rgba(214,220,230,.75)"/>
</svg>
<div id="wm">The Collection Book</div>

</body></html>
